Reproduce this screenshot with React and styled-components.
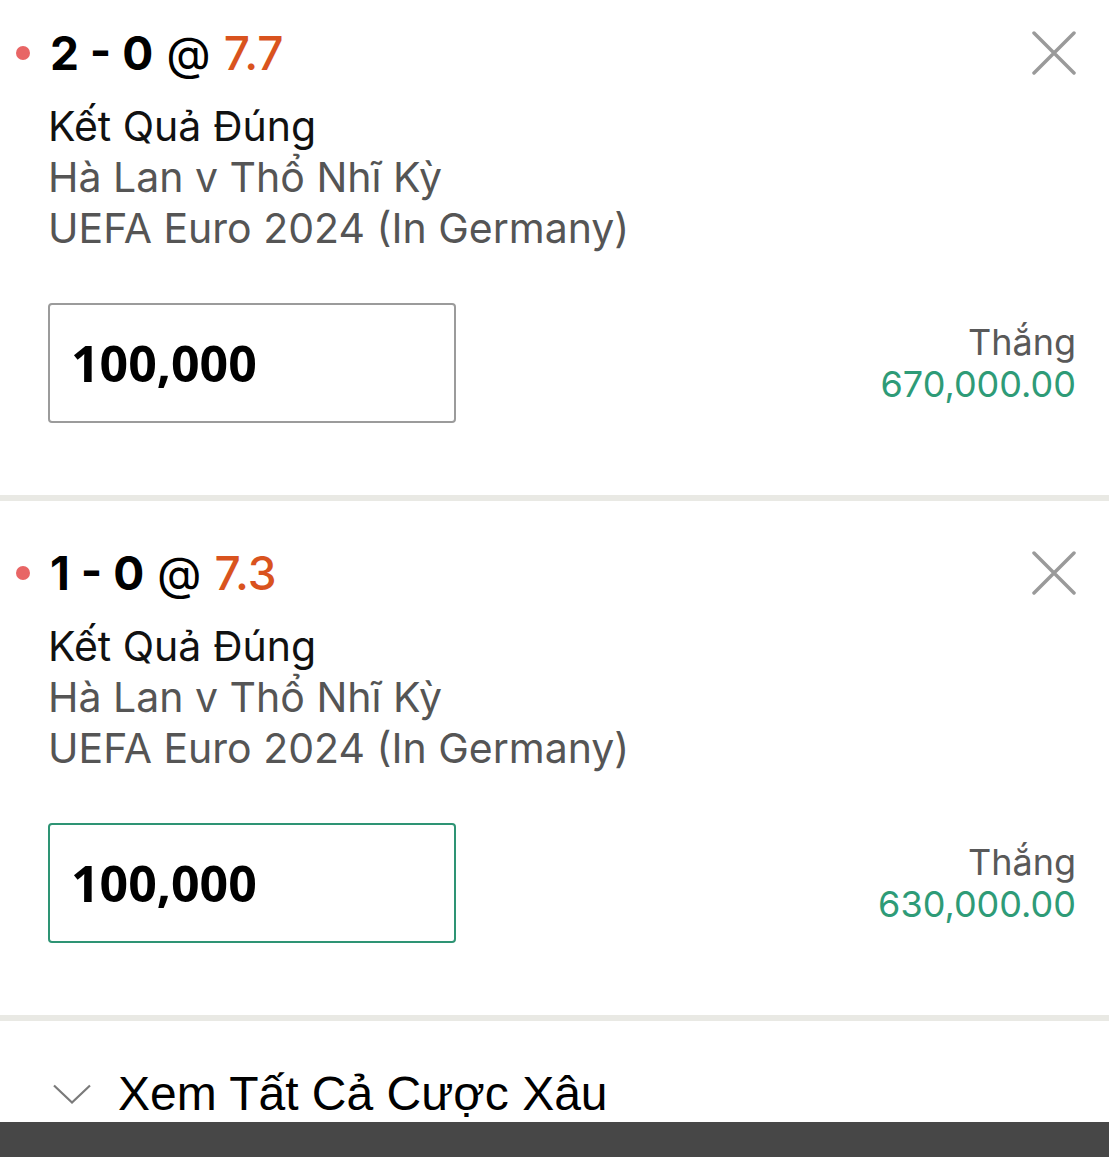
import React from "react";
import styled, { createGlobalStyle } from "styled-components";

const bets = [
  { score: "2 - 0", odds: "7.7", stake: "100,000", win: "670,000.00", focused: false },
  { score: "1 - 0", odds: "7.3", stake: "100,000", win: "630,000.00", focused: true },
];

function CloseIcon() {
  return (
    <svg width="44" height="44" viewBox="0 0 44 44">
      <path d="M2 2 L42 42 M42 2 L2 42" stroke="#9a9a9a" strokeWidth="3.5" strokeLinecap="round" />
    </svg>
  );
}

function Chevron() {
  return (
    <svg width="38" height="20" viewBox="0 0 38 20">
      <path d="M1 1.5 L19 18.5 L37 1.5" stroke="#7a7a7a" strokeWidth="2.2" fill="none" />
    </svg>
  );
}

function BetCard({ bet }) {
  return (
    <Card>
      <Header>
        <Dot />
        <Title>
          <strong>{bet.score}</strong> @ <Odds>{bet.odds}</Odds>
        </Title>
        <CloseButton>
          <CloseIcon />
        </CloseButton>
      </Header>
      <Market>Kết Quả Đúng</Market>
      <Info>Hà Lan v Thổ Nhĩ Kỳ</Info>
      <Info>UEFA Euro 2024 (In Germany)</Info>
      <StakeRow>
        <StakeBox focused={bet.focused}>{bet.stake}</StakeBox>
        <WinBox>
          <WinLabel>Thắng</WinLabel>
          <WinAmount>{bet.win}</WinAmount>
        </WinBox>
      </StakeRow>
    </Card>
  );
}

export default function App() {
  return (
    <>
      <GlobalStyle />
      <Page>
        <List>
          {bets.map((b, i) => (
            <BetCard key={i} bet={b} />
          ))}
        </List>
        <Footer>
          <Chevron />
          <FooterText>Xem Tất Cả Cược Xâu</FooterText>
        </Footer>
        <BottomBar />
      </Page>
    </>
  );
}

const GlobalStyle = createGlobalStyle`
  html, body {
    margin: 0;
    padding: 0;
    background: #fff;
  }
  body {
    font-family: Inter, "Noto Sans", sans-serif;
    overflow: hidden;
  }
`;

const Page = styled.div`
  width: 1109px;
  height: 1157px;
  display: flex;
  flex-direction: column;
  overflow: hidden;
`;

const List = styled.div`
  margin-top: -19px;
`;

const Card = styled.div`
  padding: 44px 33px 72px 48px;
  border-bottom: 6px solid #e9e9e4;
`;

const Header = styled.div`
  position: relative;
  display: flex;
  align-items: center;
  justify-content: space-between;
  height: 56px;
`;

const Dot = styled.span`
  position: absolute;
  left: -32px;
  top: 21px;
  width: 14px;
  height: 14px;
  border-radius: 50%;
  background: #e86565;
`;

const Title = styled.div`
  font-size: 46px;
  color: #000;
  line-height: 56px;
  padding-left: 2px;

  strong {
    font-weight: 700;
  }
`;

const Odds = styled.span`
  color: #d9531e;
  font-weight: 500;
`;

const CloseButton = styled.div`
  display: flex;
  align-items: center;
  justify-content: center;
`;

const Market = styled.div`
  margin-top: 20px;
  font-size: 41px;
  line-height: 51px;
  color: #111;
`;

const Info = styled.div`
  font-size: 41px;
  line-height: 51px;
  color: #555;
`;

const StakeRow = styled.div`
  margin-top: 49px;
  display: flex;
  align-items: center;
  justify-content: space-between;
`;

const StakeBox = styled.div`
  box-sizing: border-box;
  width: 408px;
  height: 120px;
  border: 2px solid ${(p) => (p.focused ? "#2e9474" : "#9b9b9b")};
  border-radius: 4px;
  padding-left: 21px;
  display: flex;
  align-items: center;
  font-family: "Open Sans", "Noto Sans", sans-serif;
  font-weight: 700;
  font-size: 50px;
  color: #000;
`;

const WinBox = styled.div`
  text-align: right;
  font-size: 36px;
  line-height: 42px;
`;

const WinLabel = styled.div`
  color: #595959;
`;

const WinAmount = styled.div`
  color: #2e9b77;
`;

const Footer = styled.div`
  flex: 1;
  display: flex;
  align-items: center;
  gap: 27px;
  padding-left: 53px;
  padding-top: 44px;
`;

const FooterText = styled.div`
  font-family: "Liberation Sans", Arial, sans-serif;
  font-size: 48px;
  color: #000;
`;

const BottomBar = styled.div`
  height: 35px;
  background: #474747;
`;
